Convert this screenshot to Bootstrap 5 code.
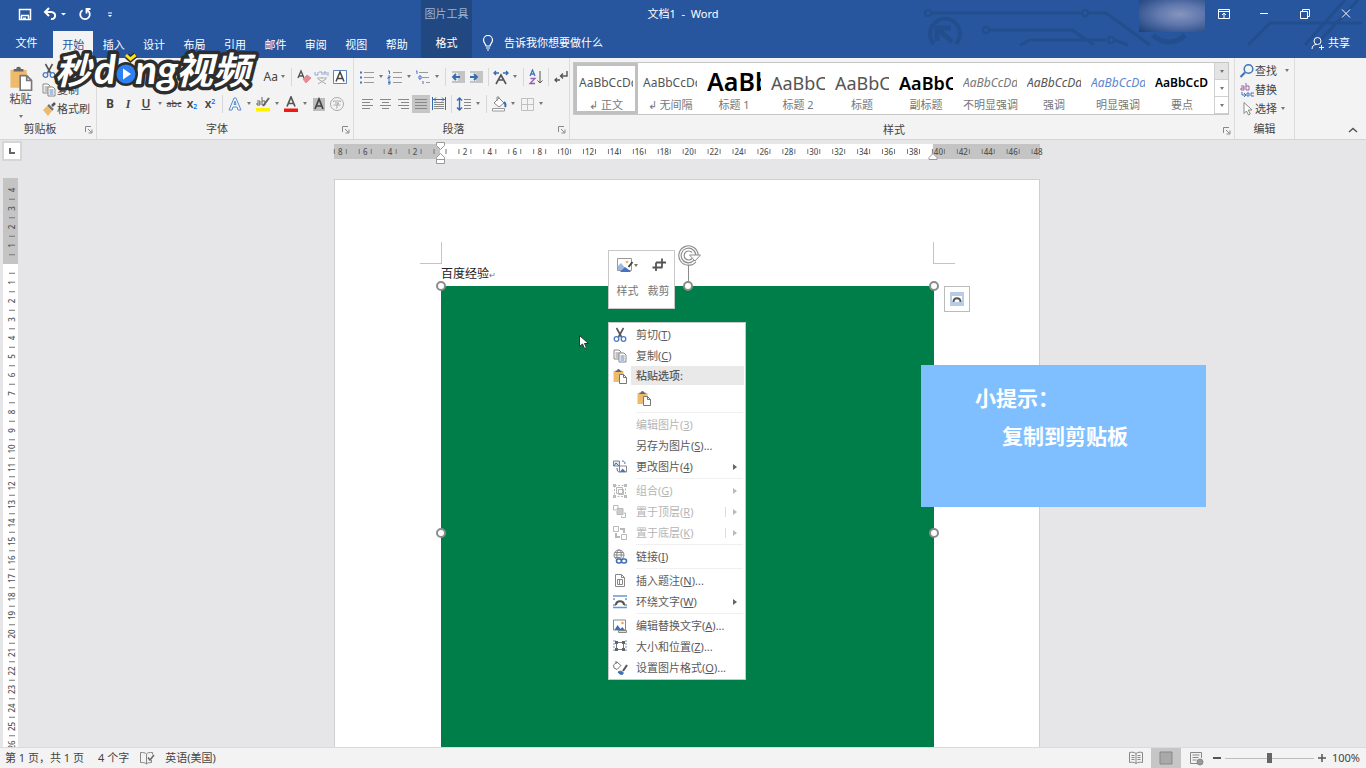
<!DOCTYPE html>
<html lang="zh-CN">
<head>
<meta charset="utf-8">
<meta name="viewport" content="width=device-width, initial-scale=1">
<title>文档1 - Word</title>
<link href="https://cdn.jsdelivr.net/npm/bootstrap@5.3.0/dist/css/bootstrap.min.css" rel="stylesheet">
<style>
  :root { --blue: #27569e; --blue-dark: #214880; --ink: #5a5a5a; }
  body { font: 11px/16px "Noto Sans", "Noto Sans CJK SC", sans-serif; color: var(--ink); background: #e6e6e8; }
  svg { display: block; flex: none; }
  .ico { width: 16px; height: 16px; fill: none; stroke: #888; }
  .btn { --bs-btn-padding-x: 0; --bs-btn-padding-y: 0; --bs-btn-border-radius: 0; --bs-btn-border-width: 0; --bs-btn-font-size: 11px; --bs-btn-line-height: 16px; --bs-btn-color: inherit; --bs-btn-disabled-opacity: 1; --bs-btn-disabled-color: inherit; display: flex; align-items: center; justify-content: center; white-space: nowrap; color: inherit; }

  /* title bar and tabs */
  .top-bar { background: var(--blue); color: #fff; }
  .title-row { height: 27px; }
  .tab-row { height: 31px; }
  .circuit { position: absolute; top: 0; right: 0; width: 466px; height: 58px; fill: none; stroke: #234e8d; stroke-width: 3; }
  .quick { width: 421px; padding-left: 16px; gap: 7px; }
  .quick .ico, .win .ico { stroke: #fff; }
  .ctx { width: 51px; background: var(--blue-dark); }
  .ctx-name { color: #9db4d6; }
  .tab-file { width: 53px; }
  .tab-set { width: 368px; padding-right: 4px; }
  .tab-set .btn { flex: 1 1 0; margin-top: 4px; }
  .tab-set .is-open { background: #f3f3f3; color: var(--blue); }
  .win .btn { width: 41px; }
  .win .account + .btn { width: 38px; }
  .account { width: 66px; height: 32px; background: radial-gradient(ellipse at 62% 45%, #8795bd 0, #6078ae 40%, #2a4c86 85%, #203f73 100%); }

  /* ribbon */
  .ribbon { background: #f3f3f3; border-bottom: 1px solid #d5d5d5; color: #444; }
  .group { border-right: 1px solid #dcdcdc; padding-top: 3px; }
  .group-body { height: 60px; }
  .group-name { height: 17px; }
  .launch { position: absolute; right: 3px; top: 4px; }
  .launch .ico { width: 9px; height: 9px; }
  .g-clip { width: 97px; } .g-font { width: 257px; } .g-para { width: 216px; } .g-edit { width: 60px; }
  .tool-rows { padding: 2px 4px 0; }
  .tools { height: 27px; }
  .tool { width: 18px; height: 18px; flex: none; }
  .wide { width: 22px; }
  .caret { width: 10px; height: 18px; flex: none; }
  .caret::after { content: ""; border: 2px solid transparent; border-top: 3px solid #777; border-bottom: 0; }
  .rule { width: 1px; height: 18px; margin: 0 3px; background: #d8d8d8; flex: none; }
  .pressed { background: #c6c6c6; }
  .glyph { font-size: 12px; font-weight: 600; }
  .gallery { height: 53px; background: #fff; border: 1px solid #c6c6c6; margin: 1px 5px 0 3px; }
  .style-item { flex: 1 1 0; min-width: 0; height: 51px; padding: 0 5px; display: block; text-align: left; overflow: hidden; }
  .style-item.chosen { box-shadow: inset 0 0 0 3px #c0c0c0; }
  .sample { display: block; height: 32px; line-height: 36px; font-size: 12px; overflow: hidden; color: #555; }
  .sample-md { font-size: 18px; } .sample-lg { font-size: 25px; line-height: 32px; }
  .style-name { display: block; text-align: center; color: #777; }
  .scroller { width: 14px; }
  .scroller .btn { flex: 1 1 0; width: 14px; border-left: 1px solid #d0d0d0; border-bottom: 1px solid #d0d0d0; }
  .edit-line { height: 19px; }
  .brand { position: absolute; left: 46px; top: 46px; width: 214px; height: 56px; z-index: 5; overflow: visible; }
  .brand text { font-family: "Noto Sans CJK SC", sans-serif; font-style: italic; font-weight: 700; fill: #fff; stroke: #2d2d2d; stroke-width: 7; stroke-linejoin: round; paint-order: stroke; }
  .brand .latin { font-family: Lato, sans-serif; }

  /* document area */
  .side { width: 22px; padding: 1px 0 0 2px; }
  .corner { width: 20px; height: 20px; background: #fff; border: 2px solid #d6d6d6; margin-bottom: 17px; }
  .ruler text { font: 500 8px "Noto Sans", sans-serif; fill: #555; text-anchor: middle; }
  .v-ruler { margin-left: 1px; width: 16px; }
  .pane { padding-right: 14px; }
  .sheet { width: 100%; max-width: 706px; }
  .paper { margin-top: 20px; background: #fff; border: 1px solid #cfcfd2; padding: 62px 105px 0 106px; }
  .margin-mark { height: 22px; }
  .margin-mark i { width: 22px; border: solid #c4c4c8; border-width: 0 1px 1px 0; margin-left: -21px; }
  .margin-mark i + i { border-width: 0 0 1px 1px; margin: 0 -21px 0 0; }
  .doc-text { font-size: 12px; line-height: 20px; margin-bottom: 1px; color: #222; }
  .photo { background: #007e49; aspect-ratio: 1; }
  .knob { position: absolute; width: 10px; height: 10px; border: 2px solid #8c8c8c; border-radius: 50%; background: #fff; translate: -50% -50%; }
  .spin { position: absolute; left: 50%; top: -42px; translate: -50% 0; width: 26px; height: 42px; fill: none; stroke: #8c8c8c; }
  .wrap-btn { position: absolute; left: calc(100% + 10px); top: 0; width: 26px; height: 26px; background: #fff; border: 1px solid #bbb; }
  .float-bar { position: absolute; left: 167px; top: -36px; width: 67px; height: 59px; background: #fff; border: 1px solid #c8c8c8; padding: 3px 0 0 3px; }
  .float-bar .btn { width: 31px; flex-direction: column; color: #777; }
  .float-bar .pic { height: 22px; margin-bottom: 7px; display: flex; align-items: center; }
  .pop { position: absolute; left: 167px; top: 36px; width: 138px; background: #fff; border: 1px solid #c8c8c8; padding: 1px 0; }
  .pop .btn { width: 100%; height: 21px; justify-content: flex-start; padding: 0 8px 0 3px; }
  .pop .ico { margin-right: 8px; }
  .pop .btn:disabled { color: #b5b5b5; }
  .pop .btn:disabled .ico { stroke: #b9b9b9; }
  .pop .more { margin-left: auto; border: 3px solid transparent; border-left: 4px solid #666; border-right: 0; }
  .pop .btn:disabled .more { border-left-color: #bbb; }
  .pop .split::before { content: ""; height: 10px; border-left: 1px solid #ddd; margin-left: auto; }
  .pop .split .more { margin-left: 7px; }
  .pop hr { margin: 1px 2px 1px 27px; border-color: #c4c4c4; }
  .pop .head { height: 19px; padding-left: 3px; }
  .pop .head b { flex: 1; height: 19px; line-height: 19px; background: #e9e9e9; margin-right: 1px; padding-left: 5px; font-weight: 500; }
  .pop .head .ico { margin-right: 3px; }
  .pop .btn.keep { height: 26px; padding-left: 27px; }
  .pointer { position: absolute; left: 138px; top: 49px; width: 10px; height: 15px; fill: #fff; stroke: #333; }
  .tip { position: absolute; right: 160px; top: 225px; width: 285px; height: 142px; background: #7fbfff; color: #fff; font-size: 21px; line-height: 38px; font-weight: 700; padding: 14px 54px; }
  .tip p + p { padding-left: 27px; }

  /* status bar */
  .status { height: 21px; background: #f3f3f3; border-top: 1px solid #dadada; color: #444; padding: 0 6px 0 5px; }
  .view { width: 30px; height: 20px; }
  .zoom { width: 89px; height: 12px; margin: 0 2px; appearance: none; background: linear-gradient(#bdbdbd, #bdbdbd) center / 100% 1px no-repeat; }
  .zoom::-webkit-slider-thumb { appearance: none; width: 5px; height: 10px; background: #666; }
</style>
</head>
<body class="d-flex flex-column vh-100 overflow-hidden">

<svg width="0" height="0" class="position-absolute" aria-hidden="true">
  <symbol id="i-cut" viewBox="0 0 16 16"><path d="M4.500 1L9.500 10M11.500 1L6.500 10" stroke="#555" stroke-width="1.600"/><circle cx="4.500" cy="12" r="2.300" stroke="#4c7bc0" stroke-width="1.300"/><circle cx="11.500" cy="12" r="2.300" stroke="#4c7bc0" stroke-width="1.300"/></symbol>
  <symbol id="i-copy" viewBox="0 0 16 16"><path d="M2 2h5l2 2v7H2zM3.500 5h4M3.500 7h4M3.500 9h4" fill="#fff"/><path d="M7 5h5l2 2v7H7z" fill="#fff"/><path d="M8.500 8h4M8.500 10h4M8.500 12h4" stroke="#5a82bd"/></symbol>
  <symbol id="i-paste" viewBox="0 0 16 16"><path d="M1.500 3h10v11h-10z" fill="#eebb6c" stroke="none"/><path d="M3.500 4V2.500H5a1.500 1.500 0 0 1 3 0h1.500V4z" fill="#666" stroke="none"/><path d="M7.500 6.500h4l3 3v6h-7zM11.500 6.500v3h3" fill="#fff" stroke="#777"/></symbol>
  <symbol id="i-picture" viewBox="0 0 18 16"><path d="M1.500 1.500h14v12h-14z" fill="#fff" stroke="#999"/><path d="M2 13V9l3-3 6 7z" fill="#9bb9df" stroke="none"/><path d="M6 13l3-3 4 3 2 2H4z" fill="#4472c4" stroke="none"/><circle cx="11" cy="5" r="1.300" fill="#f0b050" stroke="none"/><path d="M16.500 5l-4 5" stroke="#444" stroke-width="2"/></symbol>
  <symbol id="i-crop" viewBox="0 0 16 16"><path d="M5 5.500v8.500M1.500 10.500h10M5 5.500h10M11 1.500v9" stroke="#555" stroke-width="1.800"/></symbol>
  <symbol id="i-swap" viewBox="0 0 16 16"><path d="M1.500 2h6v5h-6z" fill="#dce7f5"/><path d="M2 7l2-3 3 3M10 2c2 0 3 1 3 3M5 9c0 3 1 4 3 4" stroke="#3f6fb3"/><path d="M7.500 7h7v6h-7z" fill="#fff"/><path d="M8 13l2.500-3.500L14 13z" fill="#4472c4" stroke="none"/></symbol>
  <symbol id="i-group" viewBox="0 0 16 16"><path d="M2.500 2.500h11v11h-11z" stroke-dasharray="2 1.500"/><path d="M4.500 4.500h6v6h-6zM6.500 6.500h5v5h-5z"/><path d="M1 1h3v3H1zM12 1h3v3h-3zM1 12h3v3H1zM12 12h3v3h-3z" fill="#bbb" stroke="none"/></symbol>
  <symbol id="i-front" viewBox="0 0 16 16"><path d="M6 1.500H1.500V6H4M6 1.500V4M9.500 13.500h4V9H12M9.500 13.500V12"/><path d="M5 4.500h6v6H5z" fill="#ccc"/></symbol>
  <symbol id="i-back" viewBox="0 0 16 16"><path d="M1.500 1.500h5v5h-5zM9.500 9.500h5v5h-5z"/><path d="M8 4h4v4M4 8v4h4" stroke-width="2"/></symbol>
  <symbol id="i-link" viewBox="0 0 16 16"><circle cx="7" cy="6" r="5"/><ellipse cx="7" cy="6" rx="2.200" ry="5"/><path d="M2 6h10M3 3.500h8M3 8.500h5"/><rect x="4.500" y="10" width="5" height="4" rx="2" stroke="#3f6fb3" stroke-width="1.600" fill="#fff"/><rect x="9.500" y="10" width="5" height="4" rx="2" stroke="#3f6fb3" stroke-width="1.600" fill="#fff"/></symbol>
  <symbol id="i-caption" viewBox="0 0 16 16"><path d="M3.500 1.500h6l3 3v9h-9zM9.500 1.500v3h3M5.500 6.500h5v5h-5zM7.500 7v4"/></symbol>
  <symbol id="i-wrap" viewBox="0 0 16 16"><path d="M1 2h14M1 5h14M1 11h3M12 11h3M1 13.500h14" stroke="#6d95cf" stroke-width="1.300"/><path d="M3 4h10v7H3z" fill="#fff" stroke="none"/><path d="M4 11c0-5 8-5 8 0" stroke="#555" stroke-width="2.200"/></symbol>
  <symbol id="i-alt" viewBox="0 0 16 16"><path d="M1.500 2h12v10h-12z" fill="#fff"/><path d="M2.500 12l3-5 3 4 2-2 2 3z" fill="#3f6fb3" stroke="none"/><circle cx="10.500" cy="5" r="1.200" fill="#e79b4a" stroke="none"/><path d="M6.500 12.500h8v2h-8z" fill="#ddd"/></symbol>
  <symbol id="i-size" viewBox="0 0 16 16"><path d="M1 2h3M1 5h2M1 8h2M1 11h3M13 2h2M13 5h2M13 8h2M13 11h2" stroke="#6d95cf"/><path d="M4.500 3.500h7v7h-7z" stroke="#777"/><path d="M3 2h3v3H3zM10 2h3v3h-3zM3 9h3v3H3zM10 9h3v3h-3z" fill="#666" stroke="none"/></symbol>
  <symbol id="i-format" viewBox="0 0 16 16"><path d="M1.500 5l3.500-3 4 3.500-4 4-3-1.500zM4 4V1" fill="#fff" stroke="#777"/><path d="M15 5l-4 6" stroke="#555" stroke-width="2"/><path d="M6 12c3-2 6 0 5 2-2 1-4 0-5-2z" fill="#3f6fb3" stroke="#3f6fb3"/></symbol>
  <symbol id="i-brush" viewBox="0 0 16 16"><path d="M14 2l-3 3" stroke="#555" stroke-width="2.500"/><path d="M7 4l5 5" stroke="#777" stroke-width="2.500"/><path d="M6 5l5 5-4 5-5-6z" fill="#eebb6c" stroke="none"/></symbol>
  <symbol id="i-launch" viewBox="0 0 9 9"><path d="M1.500 7V1.500H7M4 4l3.500 3.500M8 4.500V8H4.500"/></symbol>
  <symbol id="i-list" viewBox="0 0 16 16"><path d="M5 3.500h10M5 8.500h10M5 13.500h10" stroke="#999"/><path d="M1 3.500h2M1 8.500h2M1 13.500h2" stroke="#4472c4" stroke-width="2"/></symbol>
  <symbol id="i-numbers" viewBox="0 0 16 16"><path d="M6 3.500h9M6 8.500h9M6 13.500h9" stroke="#999"/><path d="M1 2h1.500v3M1 7h2v1.500H1V10h2M1 12h2v3H1M1 13.500h2" stroke="#4472c4"/></symbol>
  <symbol id="i-levels" viewBox="0 0 16 16"><path d="M4 3.500h9M7 8.500h7M11 13.500h4" stroke="#999"/><path d="M1 2h1v3M4 7h2v3H4zM8 12v3" stroke="#4472c4"/></symbol>
  <symbol id="i-outdent" viewBox="0 0 16 16"><path d="M2 2h13v12H2z" fill="#c4c4c4" stroke="none"/><path d="M2 4h6v8H2z" fill="#e8edf5" stroke="none"/><path d="M10 8H3M6 5L3 8l3 3" stroke="#356cb0" stroke-width="1.800"/></symbol>
  <symbol id="i-indent" viewBox="0 0 16 16"><path d="M2 2h13v12H2z" fill="#c4c4c4" stroke="none"/><path d="M2 4h6v8H2z" fill="#e8edf5" stroke="none"/><path d="M2 8h7M6 5l3 3-3 3" stroke="#356cb0" stroke-width="1.800"/></symbol>
  <symbol id="i-cjk" viewBox="0 0 16 16"><path d="M3 15l5-9 5 9M5 11h6" stroke="#555" stroke-width="1.600"/><path d="M1 4h5M3 2L1 4l2 2M15 4h-5M13 2l2 2-2 2" stroke="#356cb0" stroke-width="1.300"/></symbol>
  <symbol id="i-sort" viewBox="0 0 16 16"><path d="M2 7l2.500-6L7 7M3 5h3" stroke="#4472c4" stroke-width="1.300"/><path d="M2.500 9.500H7l-5 5h5" stroke="#9a5bb0" stroke-width="1.300"/><path d="M12 2v12M9.500 11.500L12 14l2.500-2.500" stroke="#555"/></symbol>
  <symbol id="i-marks" viewBox="0 0 16 16"><path d="M14 2v5H8M10 4.500L7.500 7 10 9.500M7 11H2M4 9l-2 2 2 2" stroke="#555" stroke-width="1.400"/></symbol>
  <symbol id="i-left" viewBox="0 0 16 16"><path d="M3 3.500h11M3 6.500h8M3 9.500h11M3 12.500h8"/></symbol>
  <symbol id="i-mid" viewBox="0 0 16 16"><path d="M3 3.500h11M5 6.500h7M3 9.500h11M5 12.500h7"/></symbol>
  <symbol id="i-right" viewBox="0 0 16 16"><path d="M3 3.500h11M6 6.500h8M3 9.500h11M6 12.500h8"/></symbol>
  <symbol id="i-full" viewBox="0 0 16 16"><path d="M2 3.500h12M2 6.500h12M2 9.500h12M2 12.500h12"/></symbol>
  <symbol id="i-spread" viewBox="0 0 16 16"><path d="M3 6.500h10M3 8.500h10M3 10.500h10M3 12.500h10"/><path d="M1.500 1v13M14.500 1v13M2 3.500h12M5 1.500l-2 2 2 2M11 1.500l2 2-2 2" stroke="#356cb0"/></symbol>
  <symbol id="i-spacing" viewBox="0 0 16 16"><path d="M8 3.500h7M8 6.500h7M8 9.500h7M8 12.500h7"/><path d="M3.500 2v12M1 4.500L3.500 2 6 4.500M1 11.500L3.500 14 6 11.500" stroke="#356cb0" stroke-width="1.400"/></symbol>
  <symbol id="i-fill" viewBox="0 0 16 16"><path d="M3 7l5-5 5 5-5 4zM6 5V1h2v2" fill="#fff"/><path d="M13 6c2 2 2 3 1 5" stroke="#356cb0" stroke-width="2"/><path d="M1.500 12.500h12v2.500h-12z" fill="#fff" stroke="#999"/></symbol>
  <symbol id="i-grid" viewBox="0 0 16 16"><path d="M2.500 2.500h12v12h-12zM8.500 2.500v12M2.500 8.500h12" stroke="#c0c0c0"/></symbol>
  <symbol id="i-find" viewBox="0 0 16 16"><circle cx="9.500" cy="6" r="4.300" stroke="#3f74ba" stroke-width="1.500"/><path d="M6 9.500L1.500 14" stroke="#3f74ba" stroke-width="2.200"/></symbol>
  <symbol id="i-arrow" viewBox="0 0 16 16"><path d="M5 1.500v11l2.500-2.500 2 4 1.800-1-2-4H13z" fill="#fff" stroke="#888"/></symbol>
  <symbol id="i-eraser" viewBox="0 0 16 16"><path d="M2 9l3-7 3 7M3 7h4" stroke="#555" stroke-width="1.400"/><path d="M7 10l4-4 4 3-5 5z" fill="#e88a96" stroke="#e88a96"/></symbol>
  <symbol id="i-book" viewBox="0 0 16 16"><path d="M8 3.500C6 2 4 2 1.500 2.500v10c2.500-.5 4.500-.5 6.500 1 2-1.500 4-1.500 6.500-1v-10C12 2 10 2 8 3.500zM8 3.500v10M3.500 5.500h3M3.500 7.500h3M3.500 9.500h3M9.500 5.500h3M9.500 7.500h3M9.500 9.500h3"/></symbol>
  <symbol id="i-check" viewBox="0 0 16 16"><path d="M7.500 4C6 2.500 4 2.500 1.500 2.500v10c2.500 0 4.500 0 6 1.500 1-1 2-1.500 5-1.500V10M7.500 4v10M7.500 4c1-1.500 3-1.500 6-1.500v2"/><path d="M9 7.500l2 2.500 4-5" stroke="#666" stroke-width="1.500"/></symbol>
  <symbol id="i-web" viewBox="0 0 16 16"><path d="M9 13.500H2.500v-11h11V8M4.500 5h7M4.500 7.500h6M4.500 10h4"/><circle cx="12" cy="12" r="3" fill="#999"/></symbol>
</svg>

<header class="top-bar position-relative">
  <svg class="circuit" viewBox="0 0 466 58" aria-hidden="true">
    <path d="M32 13H182M188 13H206L250 45M90 30H172L194 45M120 45L130 40H206M215 40L228 45M348 45L370 23H462M405 45L445 0M416 45L458 0"/>
    <circle cx="28" cy="13" r="3" stroke-width="2"/><circle cx="185" cy="13" r="3" stroke-width="2"/><circle cx="86" cy="30" r="3" stroke-width="2"/><circle cx="211" cy="40" r="3" stroke-width="2"/>
    <path d="M34 44a15 15 0 1 1 22 0" stroke-width="4"/><path d="M37 41V28H51M38 29L52 42" stroke-width="5"/>
    <path d="M253 35a22 22 0 0 0 32 0" stroke-width="5"/>
  </svg>
  <div class="title-row d-flex position-relative">
    <div class="d-flex" style="flex:1 1 0">
      <div class="quick d-flex align-items-center">
        <button class="btn tool" aria-label="保存"><svg class="ico" viewBox="0 0 16 16"><path d="M2.500 3.500h11v10h-11zM4 9.500h8M4.500 10v4M11.500 10v4" stroke-width="1.500"/><path d="M6 11.500h3v2.500H6z" fill="#fff" stroke="none"/></svg></button>
        <div class="d-flex"><button class="btn tool" aria-label="撤消"><svg class="ico" viewBox="0 0 16 16"><path d="M7 2L3 6l4 4M3 6h6c6 0 5 8 0 7" stroke-width="2"/></svg></button><svg class="ico" style="width:10px" viewBox="0 0 10 16"><path d="M2 8h5L4.500 10.500z" fill="#fff" stroke="none"/></svg></div>
        <button class="btn tool" aria-label="恢复"><svg class="ico" viewBox="0 0 16 16"><path d="M10.500 4.300A4.800 4.800 0 1 1 5.500 4.300M13.500 3H9.500V7.500" stroke-width="1.800"/></svg></button>
        <button class="btn tool" aria-label="自定义"><svg class="ico" viewBox="0 0 16 16"><path d="M6 7h4"/><path d="M6 9h4l-2 2z" fill="#fff" stroke="none"/></svg></button>
      </div>
      <div class="ctx ctx-name d-flex align-items-center justify-content-center text-nowrap">图片工具</div>
    </div>
    <div class="align-self-center text-nowrap">文档1&nbsp; -&nbsp; Word</div>
    <div class="d-flex justify-content-end win" style="flex:1 1 0">
      <div class="account" aria-hidden="true"></div>
      <button class="btn" aria-label="功能区显示选项"><svg class="ico" viewBox="0 0 16 16"><path d="M2.500 3.500h11v9h-11zM2.500 5.500h11M8 12V7M6 9l2-2 2 2"/></svg></button>
      <button class="btn" aria-label="最小化"><svg class="ico" viewBox="0 0 16 16"><path d="M4 7.500h8"/></svg></button>
      <button class="btn" aria-label="还原"><svg class="ico" viewBox="0 0 16 16"><path d="M3.500 5.500h7v7h-7zM5.500 5V3.500h7v7H11"/></svg></button>
      <button class="btn" aria-label="关闭"><svg class="ico" viewBox="0 0 16 16"><path d="M4 3.500l8 8M12 3.500l-8 8"/></svg></button>
    </div>
  </div>
  <nav class="tab-row d-flex position-relative">
    <button class="btn tab-file">文件</button>
    <div class="tab-set d-flex">
      <button class="btn is-open">开始</button><button class="btn">插入</button><button class="btn">设计</button><button class="btn">布局</button><button class="btn">引用</button><button class="btn">邮件</button><button class="btn">审阅</button><button class="btn">视图</button><button class="btn">帮助</button>
    </div>
    <button class="btn ctx">格式</button>
    <button class="btn ms-2 gap-2"><svg class="ico" style="stroke:#fff" viewBox="0 0 16 16"><path d="M6 11c0-2-2.500-3-2.500-6a4.500 4.500 0 0 1 9 0c0 3-2.500 4-2.500 6zM6 13h4M7 15h2" stroke-width="1.200"/></svg>告诉我你想要做什么</button>
    <button class="btn ms-auto me-3"><svg class="ico" style="stroke:#fff;width:14px" viewBox="0 0 14 16"><circle cx="6.500" cy="6" r="3.500"/><path d="M1 14c0-3 2-4.500 4.500-4.500M10.500 10v5M8 12.500h5"/></svg>&nbsp;共享</button>
  </nav>
</header>

<section class="ribbon d-flex">
  <div class="group g-clip">
    <div class="group-body d-flex">
      <button class="btn flex-column justify-content-start ms-2 pt-1" style="width:25px"><svg width="26" height="26" viewBox="0 0 16 16" fill="none"><use href="#i-paste"/></svg>粘贴<span class="caret d-flex align-items-center justify-content-center"></span></button>
      <div class="ms-2 d-flex flex-column text-nowrap">
        <button class="btn edit-line justify-content-start" aria-label="剪切"><svg class="ico"><use href="#i-cut"/></svg></button>
        <button class="btn edit-line justify-content-start"><svg class="ico"><use href="#i-copy"/></svg>复制</button>
        <button class="btn edit-line justify-content-start"><svg class="ico"><use href="#i-brush"/></svg>格式刷</button>
      </div>
    </div>
    <div class="group-name position-relative text-center pe-3">剪贴板<button class="btn launch" aria-label="剪贴板设置"><svg class="ico"><use href="#i-launch"/></svg></button></div>
  </div>

  <div class="group g-font">
    <div class="group-body tool-rows">
      <div class="tools d-flex align-items-center justify-content-end">
        <button class="btn tool wide justify-content-end" style="font-size:12px">Aa</button><button class="btn caret" aria-label="更改大小写选项"></button><span class="rule"></span>
        <button class="btn tool" aria-label="清除格式"><svg class="ico"><use href="#i-eraser"/></svg></button>
        <button class="btn tool" aria-label="拼音指南"><svg class="ico" viewBox="0 0 16 16"><path d="M1 3v3h3V3M5 3h3v3M10 6V3h2v3M14 3v4" stroke="#8fa9cf"/><path d="M3 9h10M8 8v1M4 10l8 5M12 10l-8 5" stroke="#aaa"/></svg></button>
        <button class="btn tool" aria-label="字符边框"><svg class="ico" viewBox="0 0 16 16"><path d="M1.500 1.500h13v13h-13z" stroke="#5d86bd" fill="#fff"/><path d="M4 12.500L8 3l4 9.500M5.500 9.500h5" stroke="#444" stroke-width="1.500"/></svg></button>
      </div>
      <div class="tools d-flex align-items-center">
        <button class="btn tool glyph fw-bold">B</button><button class="btn tool glyph fst-italic" style="font-family:'Liberation Serif',serif">I</button><button class="btn tool glyph text-decoration-underline">U</button><button class="btn caret" aria-label="下划线选项"></button><button class="btn tool text-decoration-line-through" style="font-size:9px">abc</button><button class="btn tool glyph" aria-label="下标"><span>x<sub class="text-primary" style="font-size:7px">2</sub></span></button><button class="btn tool glyph" aria-label="上标"><span>x<sup class="text-primary" style="font-size:7px">2</sup></span></button><span class="rule"></span>
        <button class="btn tool" aria-label="文本效果"><svg class="ico" viewBox="0 0 16 16"><path d="M2 14L7 2h2l5 12h-3l-1-3H6l-1 3zM7 8.500h2L8 5z" stroke="#5a8ed0"/></svg></button><button class="btn caret" aria-label="文本效果选项"></button>
        <button class="btn tool" aria-label="突出显示"><svg class="ico" viewBox="0 0 16 16"><path d="M1 12h14v3.500H1z" fill="#fff200" stroke="none"/><path d="M2 5h3v4H2V7h3M7 1v8h3V5H7" stroke="#666"/><path d="M14 2l-6 8" stroke="#666" stroke-width="2"/></svg></button><button class="btn caret" aria-label="突出显示选项"></button>
        <button class="btn tool" aria-label="字体颜色"><svg class="ico" viewBox="0 0 16 16"><path d="M1 12.500h14V16H1z" fill="#f01810" stroke="none"/><path d="M4 10.500L8 1l4 9.500M5.500 7.500h5" stroke="#555" stroke-width="1.700"/></svg></button><button class="btn caret" aria-label="字体颜色选项"></button>
        <button class="btn tool" aria-label="字符底纹"><svg class="ico" viewBox="0 0 16 16"><path d="M2 2h12v13H2z" fill="#bcbcbc" stroke="none"/><path d="M4 13L8 3l4 10M5.500 10h5" stroke="#444" stroke-width="1.700"/></svg></button>
        <button class="btn tool" aria-label="带圈字符"><svg class="ico" viewBox="0 0 16 16"><circle cx="8" cy="8" r="6.500" stroke="#aaa"/><path d="M4.500 6V5h7v1M6 7h4L8 8.500V12H7M4.500 9h7" stroke="#aaa"/></svg></button>
      </div>
    </div>
    <div class="group-name position-relative text-center pe-3">字体<button class="btn launch" aria-label="字体设置"><svg class="ico"><use href="#i-launch"/></svg></button></div>
  </div>

  <div class="group g-para">
    <div class="group-body tool-rows">
      <div class="tools d-flex align-items-center">
        <button class="btn tool" aria-label="项目符号"><svg class="ico"><use href="#i-list"/></svg></button><button class="btn caret" aria-label="项目符号选项"></button>
        <button class="btn tool" aria-label="编号"><svg class="ico"><use href="#i-numbers"/></svg></button><button class="btn caret" aria-label="编号选项"></button>
        <button class="btn tool" aria-label="多级列表"><svg class="ico"><use href="#i-levels"/></svg></button><button class="btn caret" aria-label="多级列表选项"></button><span class="rule"></span>
        <button class="btn tool" aria-label="减少缩进量"><svg class="ico"><use href="#i-outdent"/></svg></button><button class="btn tool" aria-label="增加缩进量"><svg class="ico"><use href="#i-indent"/></svg></button><span class="rule"></span>
        <button class="btn tool" aria-label="中文版式"><svg class="ico"><use href="#i-cjk"/></svg></button><button class="btn caret" aria-label="中文版式选项"></button><span class="rule"></span>
        <button class="btn tool" aria-label="排序"><svg class="ico"><use href="#i-sort"/></svg></button><span class="rule"></span>
        <button class="btn tool" aria-label="显示编辑标记"><svg class="ico"><use href="#i-marks"/></svg></button>
      </div>
      <div class="tools d-flex align-items-center">
        <button class="btn tool" aria-label="左对齐"><svg class="ico"><use href="#i-left"/></svg></button><button class="btn tool" aria-label="居中"><svg class="ico"><use href="#i-mid"/></svg></button><button class="btn tool" aria-label="右对齐"><svg class="ico"><use href="#i-right"/></svg></button><button class="btn tool pressed" aria-label="两端对齐"><svg class="ico"><use href="#i-full"/></svg></button><button class="btn tool" aria-label="分散对齐"><svg class="ico"><use href="#i-spread"/></svg></button><span class="rule"></span>
        <button class="btn tool" aria-label="行距"><svg class="ico"><use href="#i-spacing"/></svg></button><button class="btn caret" aria-label="行距选项"></button><span class="rule"></span>
        <button class="btn tool" aria-label="底纹"><svg class="ico"><use href="#i-fill"/></svg></button><button class="btn caret" aria-label="底纹选项"></button>
        <button class="btn tool" aria-label="边框"><svg class="ico"><use href="#i-grid"/></svg></button><button class="btn caret" aria-label="边框选项"></button>
      </div>
    </div>
    <div class="group-name position-relative text-center pe-3">段落<button class="btn launch" aria-label="段落设置"><svg class="ico"><use href="#i-launch"/></svg></button></div>
  </div>

  <div class="group flex-fill" style="min-width:0;max-width:665px">
    <div class="group-body">
      <div class="gallery d-flex">
        <button class="btn style-item chosen"><span class="sample">AaBbCcDd</span><span class="style-name">↲ 正文</span></button>
        <button class="btn style-item"><span class="sample">AaBbCcDd</span><span class="style-name">↲ 无间隔</span></button>
        <button class="btn style-item"><span class="sample sample-lg fw-semibold text-black">AaBb</span><span class="style-name">标题 1</span></button>
        <button class="btn style-item"><span class="sample sample-md">AaBbC</span><span class="style-name">标题 2</span></button>
        <button class="btn style-item"><span class="sample sample-md">AaBbC</span><span class="style-name">标题</span></button>
        <button class="btn style-item"><span class="sample sample-md fw-semibold text-black">AaBbC</span><span class="style-name">副标题</span></button>
        <button class="btn style-item"><span class="sample fst-italic" style="color:#777">AaBbCcDd</span><span class="style-name">不明显强调</span></button>
        <button class="btn style-item"><span class="sample fst-italic">AaBbCcDd</span><span class="style-name">强调</span></button>
        <button class="btn style-item"><span class="sample fst-italic" style="color:#5b86cf">AaBbCcDd</span><span class="style-name">明显强调</span></button>
        <button class="btn style-item"><span class="sample fw-semibold text-black">AaBbCcD</span><span class="style-name">要点</span></button>
        <div class="scroller d-flex flex-column"><button class="btn caret" style="background:#e4e4e4" aria-label="上一行"></button><button class="btn caret" aria-label="下一行"></button><button class="btn caret" aria-label="其他样式"></button></div>
      </div>
    </div>
    <div class="group-name position-relative text-center pe-3">样式<button class="btn launch" aria-label="样式设置"><svg class="ico"><use href="#i-launch"/></svg></button></div>
  </div>

  <div class="group g-edit">
    <div class="group-body ps-1 d-flex flex-column">
      <button class="btn edit-line justify-content-start"><svg class="ico"><use href="#i-find"/></svg>查找<span class="caret d-flex align-items-center ps-1 ms-1"></span></button>
      <button class="btn edit-line justify-content-start"><svg class="ico" viewBox="0 0 16 16"><path d="M2 4h3v4H2V6h3M7 1v7h3V4H7" stroke="#9566aa"/><path d="M3 10v3h3M5 11l2 2-2 2M8 11h2v3H8zM15 11h-3v3h3" stroke="#4472c4"/></svg>替换</button>
      <button class="btn edit-line justify-content-start"><svg class="ico"><use href="#i-arrow"/></svg>选择<span class="caret d-flex align-items-center ps-1"></span></button>
    </div>
    <div class="group-name text-center">编辑</div>
  </div>
  <button class="btn ms-auto me-1 align-self-end tool" aria-label="折叠功能区"><svg class="ico" viewBox="0 0 16 16"><path d="M4 10l4-3.500L12 10" stroke="#555" stroke-width="1.500"/></svg></button>
</section>

<svg class="brand" viewBox="0 0 214 56" role="img" aria-label="秒dong视频">
  <text x="9" y="38" font-size="36">秒</text><text x="130" y="38" font-size="37">视频</text>
  <text x="48" y="38" font-size="41" class="latin">d</text><text x="89" y="38" font-size="41" class="latin">ng</text>
  <circle cx="80" cy="28" r="12" fill="#2d2d2d"/><circle cx="80" cy="28" r="9.500" fill="#2f80f2"/><path d="M77 22.500l8 5.500-8 5.500z" fill="#fff"/>
  <path d="M81 10l3.500 3 5-4" fill="none" stroke="#2d2d2d" stroke-width="6"/><path d="M80 9l4.500 4 5-4" fill="none" stroke="#ffe11a" stroke-width="3"/>
</svg>

<main class="d-flex flex-fill overflow-hidden position-relative">
  <div class="side">
    <button class="btn corner" aria-label="制表符"><svg width="8" height="8" viewBox="0 0 8 8"><path d="M2 1v5h5" fill="none" stroke="#666" stroke-width="2"/></svg></button>
    <svg id="vRuler" class="ruler v-ruler" height="571" viewBox="0 0 16 571"><path d="M0 0h15v86H0z" fill="#c4c4c4"/><path d="M0 86h15v485H0z" fill="#fff"/></svg>
  </div>
  <div class="pane flex-fill d-flex flex-column align-items-center pt-1">
    <svg id="hRuler" class="ruler sheet overflow-visible" height="15" viewBox="0 0 706 15"><path d="M0 0h706v15H0z" fill="#c4c4c4"/><path d="M106 0h493v15H106z" fill="#fff"/></svg>
    <article class="sheet paper">
      <div class="margin-mark d-flex justify-content-between"><i></i><i></i></div>
      <p class="doc-text">百度经验<span class="text-secondary" style="font-size:8px">↵</span></p>
      <div class="photo position-relative">
        <svg class="spin" viewBox="0 0 26 42"><path d="M13.500 21v17"/><path d="M20 17a8.500 8.500 0 1 1 2-6" stroke-width="3.500"/><path d="M20 17a8.500 8.500 0 1 1 2-6" stroke="#fff" stroke-width="1.200"/><path d="M14.500 11h11l-5.500 6z" fill="#fff"/><path d="M17 14.500a4.500 4.500 0 1 1 0-6" stroke-width="1.200"/></svg>
        <i class="knob top-0 start-0"></i><i class="knob top-0 start-50"></i><i class="knob top-0 start-100"></i><i class="knob top-50 start-0"></i><i class="knob top-50 start-100"></i>
        <button class="btn wrap-btn" aria-label="布局选项"><svg width="14" height="14" viewBox="0 0 14 14"><path d="M0 0h14v14H0z" fill="#b9cce6"/><path d="M2 4h10v6H2z" fill="#fff"/><path d="M3.500 10c0-5 7-5 7 0" fill="none" stroke="#555" stroke-width="2"/></svg></button>
        <svg class="pointer" viewBox="0 0 10 15"><path d="M.5.5v11L3.500 9l2 4.500 2-1-2-4h4z"/></svg>
        <div class="float-bar d-flex justify-content-center">
          <button class="btn justify-content-start"><span class="pic ps-1"><svg class="ico" style="width:18px"><use href="#i-picture"/></svg><span class="caret d-flex align-items-center"></span></span>样式</button>
          <button class="btn justify-content-start"><span class="pic"><svg class="ico"><use href="#i-crop"/></svg></span>裁剪</button>
        </div>
        <div class="pop">
          <button class="btn"><svg class="ico"><use href="#i-cut"/></svg><span>剪切(<u>T</u>)</span></button>
          <button class="btn"><svg class="ico"><use href="#i-copy"/></svg><span>复制(<u>C</u>)</span></button>
          <div class="head d-flex align-items-center"><svg class="ico"><use href="#i-paste"/></svg><b>粘贴选项:</b></div>
          <button class="btn keep" aria-label="保留源格式"><svg class="ico"><use href="#i-paste"/></svg></button>
          <hr>
          <button class="btn" disabled><span class="ico"></span><span>编辑图片(<u>3</u>)</span></button>
          <button class="btn"><span class="ico"></span><span>另存为图片(<u>S</u>)...</span></button>
          <button class="btn"><svg class="ico"><use href="#i-swap"/></svg><span>更改图片(<u>4</u>)</span><i class="more"></i></button>
          <hr>
          <button class="btn" disabled><svg class="ico"><use href="#i-group"/></svg><span>组合(<u>G</u>)</span><i class="more"></i></button>
          <button class="btn" disabled><svg class="ico"><use href="#i-front"/></svg><span>置于顶层(<u>R</u>)</span><span class="split d-flex align-items-center ms-auto"><i class="more"></i></span></button>
          <button class="btn" disabled><svg class="ico"><use href="#i-back"/></svg><span>置于底层(<u>K</u>)</span><span class="split d-flex align-items-center ms-auto"><i class="more"></i></span></button>
          <hr>
          <button class="btn"><svg class="ico"><use href="#i-link"/></svg><span>链接(<u>I</u>)</span></button>
          <hr>
          <button class="btn"><svg class="ico"><use href="#i-caption"/></svg><span>插入题注(<u>N</u>)...</span></button>
          <button class="btn"><svg class="ico"><use href="#i-wrap"/></svg><span>环绕文字(<u>W</u>)</span><i class="more"></i></button>
          <hr>
          <button class="btn"><svg class="ico"><use href="#i-alt"/></svg><span>编辑替换文字(<u>A</u>)...</span></button>
          <button class="btn"><svg class="ico"><use href="#i-size"/></svg><span>大小和位置(<u>Z</u>)...</span></button>
          <button class="btn"><svg class="ico"><use href="#i-format"/></svg><span>设置图片格式(<u>O</u>)...</span></button>
        </div>
      </div>
    </article>
  </div>
  <aside class="tip"><p class="m-0">小提示：</p><p class="m-0">复制到剪贴板</p></aside>
</main>

<footer class="status d-flex align-items-center">
  <span>第 1 页，共 1 页</span><span style="margin-left:14px">4 个字</span>
  <svg class="ico mx-2" style="width:20px"><use href="#i-check"/></svg><span>英语(美国)</span>
  <button class="btn view ms-auto" aria-label="阅读视图"><svg class="ico"><use href="#i-book"/></svg></button>
  <button class="btn view pressed" aria-label="页面视图"><svg class="ico" viewBox="0 0 16 16"><path d="M2 2h12v12H2z" fill="#a9a9a9" stroke="#888"/></svg></button>
  <button class="btn view" aria-label="Web 版式视图"><svg class="ico"><use href="#i-web"/></svg></button>
  <button class="btn" style="width:12px" aria-label="缩小"><svg width="8" height="8" viewBox="0 0 8 8"><path d="M0 4h8" stroke="#555" stroke-width="2"/></svg></button>
  <input class="zoom" type="range" min="0" max="200" value="100" aria-label="显示比例">
  <button class="btn" style="width:12px" aria-label="放大"><svg width="8" height="8" viewBox="0 0 8 8"><path d="M0 4h8M4 0v8" stroke="#555" stroke-width="1.500"/></svg></button>
  <span class="ms-1">100%</span>
</footer>

<script src="https://cdn.jsdelivr.net/npm/bootstrap@5.3.0/dist/js/bootstrap.bundle.min.js"></script>
<script>
  const NS = 'http://www.w3.org/2000/svg';
  const add = (parent, name, attrs, text) => {
    const el = document.createElementNS(NS, name);
    for (const key in attrs) el.setAttribute(key, attrs[key]);
    if (text !== undefined) el.textContent = text;
    parent.append(el);
  };
  // Horizontal ruler: a number every two characters, a tick on either side
  const h = document.getElementById('hRuler'), stepX = 24.92;
  for (let n = -4; n <= 24; n++) {
    const x = 106 + n * stepX;
    if (n) add(h, 'text', { x: x, y: 10.5 }, Math.abs(n * 2));
    for (const t of [x - 6, x + 6]) if (n && t > 0 && t < 706) add(h, 'path', { d: `M${t} 5v5`, stroke: '#777' });
  }
  for (const t of [100, 112]) add(h, 'path', { d: `M${t} 5v5`, stroke: '#777' });
  const marker = { fill: '#fff', stroke: '#999' };
  add(h, 'path', { d: 'M102.500-1.500h8v3l-4 4-4-4zM102.500 14.500v-1l4-4 4 4v6h-8zM102.500 15.500h8', ...marker });
  add(h, 'path', { d: 'M595 15.500v-2l4-4 4 4v2z', ...marker });
  // Vertical ruler: one number per line, read bottom to top
  const v = document.getElementById('vRuler'), stepY = 18.5;
  for (let n = -4; n <= 26; n++) {
    const y = 86 + n * stepY;
    if (n) add(v, 'text', { transform: `translate(12 ${y}) rotate(-90)` }, Math.abs(n));
    add(v, 'path', { d: `M6 ${y + stepY / 2}h6`, stroke: '#777' });
  }
</script>
</body>
</html>
